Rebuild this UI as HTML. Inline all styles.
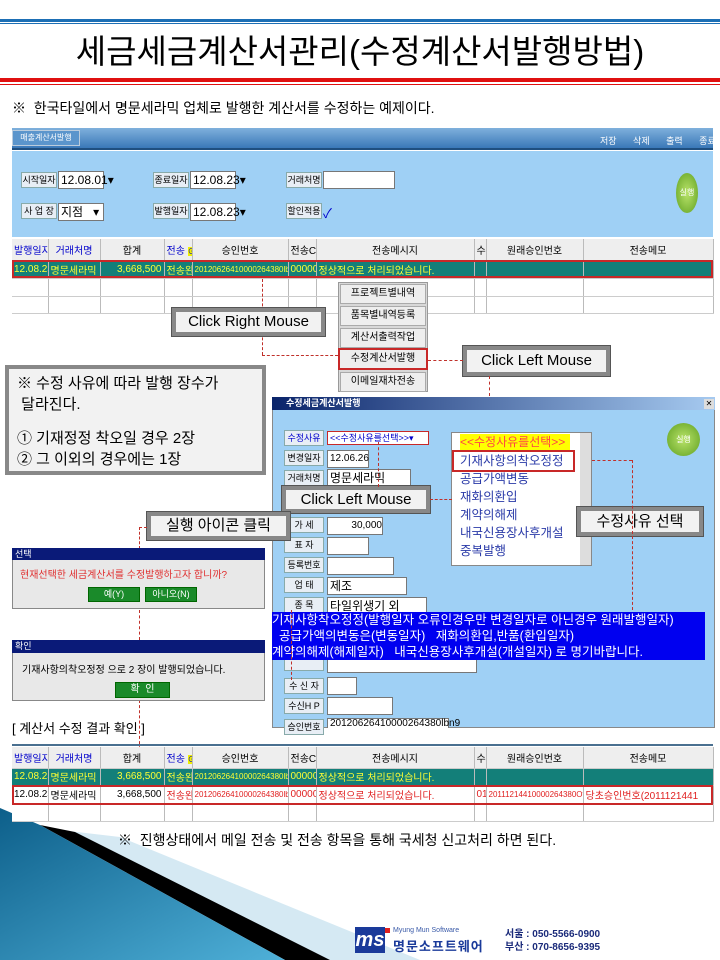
<!DOCTYPE html>
<html><head><meta charset="utf-8">
<style>
*{margin:0;padding:0;box-sizing:border-box}
body{width:720px;height:960px;position:relative;background:#fff;font-family:"Liberation Sans","Noto Sans CJK KR",sans-serif;overflow:hidden;color:#000}
.a{position:absolute}
.f{font-size:11px;white-space:nowrap}
.lbl{position:absolute;background:#e8eef5;border:1px solid #8aa;font-size:9px;text-align:center;line-height:14px;height:16px}
.inp{position:absolute;background:#fff;border:1px solid #777;font-size:12px;line-height:16px;height:18px;padding-left:2px}
.call{position:absolute;background:#f2f2f2;border:4px solid #888;outline:1px solid #555;font-size:15px;white-space:nowrap;text-align:center}
.grid td{border-right:1px solid #bbb;border-bottom:1px solid #ccc;font-size:10px;white-space:nowrap;overflow:hidden;padding:0 2px}
.grid{border-collapse:collapse;table-layout:fixed}
.dash{position:absolute;border-color:#c0302a;border-style:dashed;border-width:0}
</style></head><body>
<!-- decoration (behind) -->
<svg class="a" style="left:0;top:790px" width="720" height="170">
<defs><linearGradient id="g" x1="0" y1="0" x2="1" y2="1"><stop offset="0" stop-color="#0d5f8a"/><stop offset="1" stop-color="#4fb0d8"/></linearGradient></defs>
<polygon points="60,40 120,47 420,170 330,170" fill="#d5e9f3"/>
<polygon points="40,35 75,42 330,170 285,170" fill="#000"/>
<polygon points="0,18 40,35 285,170 0,170" fill="url(#g)"/>
</svg>
<!-- title -->
<div class="a" style="left:0;top:19px;width:720px;height:3px;background:#1d6fb5"></div>
<div class="a" style="left:0;top:23px;width:720px;height:1px;background:#1d6fb5"></div>
<div class="a" style="left:0;top:27px;width:720px;text-align:center;font-size:33px;line-height:50px">세금세금계산서관리(수정계산서발행방법)</div>
<div class="a" style="left:0;top:78px;width:720px;height:4px;background:#e01010"></div>
<div class="a" style="left:0;top:84px;width:720px;height:1px;background:#e01010"></div>
<div class="a" style="left:12px;top:98px;font-size:14px">※ &nbsp;한국타일에서 명문세라믹 업체로 발행한 계산서를 수정하는 예제이다.</div>

<!-- top app -->
<div class="a" style="left:12px;top:128px;width:701px;height:22px;background:linear-gradient(#7fb0dc,#3a78b8);border-bottom:2px solid #1f4f80"></div>
<div class="a f" style="left:12px;top:130px;width:68px;height:16px;background:#5b95cc;border:1px solid #bcd;color:#fff;font-size:8px;text-align:center;line-height:14px">매출계산서발행</div>
<div class="a f" style="left:600px;top:134px;color:#fff;font-size:9px;word-spacing:14px">저장 삭제 출력 종료</div>
<div class="a" style="left:12px;top:151px;width:701px;height:86px;background:#9fd0f5"></div>
<div class="lbl" style="left:21px;top:172px;width:36px">시작일자</div><div class="inp" style="left:58px;top:171px;width:46px">12.08.01▾</div>
<div class="lbl" style="left:21px;top:203px;width:36px">사 업 장</div><div class="inp" style="left:58px;top:203px;width:46px">지점 &nbsp;&nbsp;▾</div>
<div class="lbl" style="left:153px;top:172px;width:36px">종료일자</div><div class="inp" style="left:190px;top:171px;width:46px">12.08.23▾</div>
<div class="lbl" style="left:153px;top:203px;width:36px">발행일자</div><div class="inp" style="left:190px;top:203px;width:46px">12.08.23▾</div>
<div class="lbl" style="left:286px;top:172px;width:36px">거래처명</div><div class="inp" style="left:323px;top:171px;width:72px"></div>
<div class="lbl" style="left:286px;top:203px;width:36px">할인적용</div><div class="a" style="left:323px;top:203px;color:#00c;font-size:13px">✓</div>
<div class="a" style="left:676px;top:173px;width:22px;height:40px;border-radius:50%;background:radial-gradient(#b9e36a,#5fa020);color:#fff;font-size:8px;text-align:center;line-height:40px">실행</div>
<table class="grid a" style="left:12px;top:239px;width:701px;background:#fff">
<colgroup><col width="36"><col width="52"><col width="64"><col width="28"><col width="96"><col width="28"><col width="158"><col width="12"><col width="97"><col width="130"></colgroup>
<tr style="height:21px;background:#eee;text-align:center"><td style="color:#00c">발행일자</td><td style="color:#00c">거래처명</td><td>합계</td><td style="color:#00c">전송 <span style="background:#ee0;font-size:8px">⊙</span></td><td>승인번호</td><td>전송CD</td><td>전송메시지</td><td>수</td><td>원래승인번호</td><td>전송메모</td></tr>
<tr style="height:18px;background:#137f79;color:#ff3"><td>12.08.23</td><td>명문세라믹</td><td style="text-align:right">3,668,500</td><td>전송완료</td><td style="font-size:8px">20120626410000264380lbn9</td><td>000000</td><td>정상적으로 처리되었습니다.</td><td></td><td></td><td></td></tr>
<tr style="height:18px"><td></td><td></td><td></td><td></td><td></td><td></td><td></td><td></td><td></td><td></td></tr>
<tr style="height:17px"><td></td><td></td><td></td><td></td><td></td><td></td><td></td><td></td><td></td><td></td></tr>
</table>
<div class="a" style="left:12px;top:260px;width:701px;height:18px;border:2px solid #c82828"></div>
<div class="dash" style="left:262px;top:279px;height:76px;border-left-width:1px"></div>
<div class="dash" style="left:262px;top:355px;width:76px;border-top-width:1px"></div>

<!-- context menu -->
<div class="a" style="left:338px;top:282px;width:90px;height:110px;background:#d8d8d8;border:1px solid #999"></div>
<div class="a f" style="left:340px;top:284px;width:86px;height:20px;background:#eee;border:1px solid #aaa;text-align:center;line-height:18px;font-size:10px">프로젝트별내역</div>
<div class="a f" style="left:340px;top:306px;width:86px;height:20px;background:#eee;border:1px solid #aaa;text-align:center;line-height:18px;font-size:10px">품목별내역등록</div>
<div class="a f" style="left:340px;top:328px;width:86px;height:20px;background:#eee;border:1px solid #aaa;text-align:center;line-height:18px;font-size:10px">계산서출력작업</div>
<div class="a f" style="left:338px;top:348px;width:90px;height:22px;background:#eee;border:2px solid #c82828;text-align:center;line-height:18px;font-size:10px">수정계산서발행</div>
<div class="a f" style="left:340px;top:372px;width:86px;height:20px;background:#eee;border:1px solid #aaa;text-align:center;line-height:18px;font-size:10px">이메일재차전송</div>
<div class="call" style="left:172px;top:308px;width:153px;height:28px;line-height:20px">Click Right Mouse</div>
<div class="call" style="left:463px;top:346px;width:147px;height:30px;line-height:22px">Click Left Mouse</div>
<div class="dash" style="left:428px;top:360px;width:35px;border-top-width:1px"></div>
<div class="dash" style="left:489px;top:376px;height:20px;border-left-width:1px"></div>

<!-- note -->
<div class="a" style="left:5px;top:365px;width:261px;height:110px;background:#f2f2f2;border:4px solid #888;font-size:15px;line-height:21px;padding:4px 8px">※ 수정 사유에 따라 발행 장수가<br>&nbsp;달라진다.<div style="height:13px"></div>① 기재정정 착오일 경우 2장<br>② 그 이외의 경우에는 1장</div>

<!-- modal -->
<div class="a" style="left:272px;top:397px;width:443px;height:331px;background:#9fd0f5;border:1px solid #888"></div>
<div class="a" style="left:272px;top:397px;width:443px;height:13px;background:linear-gradient(90deg,#0a246a,#a6caf0);color:#fff;font-size:9px;line-height:13px;padding-left:14px;font-weight:bold">수정세금계산서발행</div>
<div class="a" style="left:704px;top:399px;width:10px;height:10px;background:#ddd;font-size:8px;line-height:10px;text-align:center">✕</div>
<div class="lbl" style="left:284px;top:430px;width:40px;color:#00c">수정사유</div><div class="inp" style="left:327px;top:431px;width:102px;border:1px solid #c82828;color:#00c;font-size:9px;line-height:12px;height:14px">&lt;&lt;수정사유를선택&gt;&gt;▾</div>
<div class="lbl" style="left:284px;top:450px;width:40px">변경일자</div><div class="inp" style="left:327px;top:450px;width:42px;font-size:10px">12.06.26</div>
<div class="lbl" style="left:284px;top:470px;width:40px">거래처명</div><div class="inp" style="left:327px;top:469px;width:84px">명문세라믹</div>
<div class="lbl" style="left:284px;top:517px;width:40px">가 세</div><div class="inp" style="left:327px;top:517px;width:56px;text-align:right;font-size:10px">30,000</div>
<div class="lbl" style="left:284px;top:537px;width:40px">표 자</div><div class="inp" style="left:327px;top:537px;width:42px"></div>
<div class="lbl" style="left:284px;top:557px;width:40px">등록번호</div><div class="inp" style="left:327px;top:557px;width:67px"></div>
<div class="lbl" style="left:284px;top:577px;width:40px">업 태</div><div class="inp" style="left:327px;top:577px;width:80px">제조</div>
<div class="lbl" style="left:284px;top:597px;width:40px">종 목</div><div class="inp" style="left:327px;top:597px;width:100px">타일위생기 외</div>
<div class="lbl" style="left:284px;top:655px;width:40px"></div><div class="inp" style="left:327px;top:655px;width:150px"></div>
<div class="lbl" style="left:284px;top:678px;width:40px">수 신 자</div><div class="inp" style="left:327px;top:677px;width:30px"></div>
<div class="lbl" style="left:284px;top:698px;width:40px">수신H P</div><div class="inp" style="left:327px;top:697px;width:66px"></div>
<div class="lbl" style="left:284px;top:719px;width:40px">승인번호</div><div class="inp" style="left:327px;top:718px;width:122px;font-size:10px;height:10px;line-height:10px;border-bottom:0">20120626410000264380lbn9</div>
<div class="a" style="left:667px;top:423px;width:33px;height:33px;border-radius:50%;background:radial-gradient(#b9e36a,#5fa020);color:#fff;font-size:8px;text-align:center;line-height:33px">실행</div>
<!-- listbox -->
<div class="a" style="left:451px;top:432px;width:141px;height:134px;background:#fff;border:1px solid #888"></div>
<div class="a" style="left:580px;top:433px;width:11px;height:132px;background:#ddd"></div>
<div class="a" style="left:460px;top:434px;width:110px;height:16px;background:#ff0;color:#f44;font-size:12px;line-height:16px">&lt;&lt;수정사유를선택&gt;&gt;</div>
<div class="a" style="left:452px;top:450px;width:123px;height:22px;border:2px solid #c82828"></div>
<div class="a" style="left:460px;top:452px;color:#2a3aa8;font-size:12.5px;line-height:18px">기재사항의착오정정<br>공급가액변동<br>재화의환입<br>계약의해제<br>내국신용장사후개설<br>중복발행</div>
<div class="call" style="left:282px;top:486px;width:148px;height:27px;line-height:19px">Click Left Mouse</div>
<div class="dash" style="left:430px;top:499px;width:22px;border-top-width:1px"></div>
<div class="call" style="left:577px;top:507px;width:126px;height:29px;line-height:21px">수정사유 선택</div>
<div class="dash" style="left:592px;top:460px;width:40px;border-top-width:1px"></div>
<div class="dash" style="left:632px;top:460px;height:150px;border-left-width:1px"></div>
<div class="dash" style="left:378px;top:442px;height:45px;border-left-width:1px"></div>
<!-- blue band -->
<div class="a" style="left:272px;top:612px;width:433px;height:48px;background:#0000f0;color:#fff;font-size:12.5px;line-height:16px;white-space:nowrap;overflow:hidden">기재사항착오정정(발행일자 오류인경우만 변경일자로 아닌경우 원래발행일자)<br>&nbsp;&nbsp;공급가액의변동은(변동일자) &nbsp;&nbsp;재화의환입,반품(환입일자)<br>계약의해제(해제일자) &nbsp;&nbsp;내국신용장사후개설(개설일자) 로 명기바랍니다.</div>

<!-- 실행 call -->
<div class="call" style="left:147px;top:512px;width:143px;height:28px;line-height:20px">실행 아이콘 클릭</div>
<div class="dash" style="left:139px;top:527px;width:8px;border-top-width:1px"></div>
<div class="dash" style="left:139px;top:527px;height:22px;border-left-width:1px"></div>
<div class="dash" style="left:139px;top:610px;height:30px;border-left-width:1px"></div>
<div class="dash" style="left:139px;top:700px;height:80px;border-left-width:1px"></div>
<div class="dash" style="left:291px;top:610px;height:70px;border-left-width:1px"></div>

<!-- dialogs -->
<div class="a" style="left:12px;top:548px;width:253px;height:61px;background:#e8e8e8;border:1px solid #888"></div>
<div class="a" style="left:12px;top:548px;width:253px;height:12px;background:#0a1a78;color:#fff;font-size:9px;line-height:12px;padding-left:3px">선택</div>
<div class="a" style="left:20px;top:566px;color:#e03030;font-size:10px">현재선택한 세금계산서를 수정발행하고자 합니까?</div>
<div class="a" style="left:88px;top:587px;width:52px;height:15px;background:#1a8a2a;border:1px solid #060;color:#fff;font-size:9px;text-align:center;line-height:13px">예(Y)</div>
<div class="a" style="left:145px;top:587px;width:52px;height:15px;background:#1a8a2a;border:1px solid #060;color:#fff;font-size:9px;text-align:center;line-height:13px">아니오(N)</div>
<div class="a" style="left:12px;top:640px;width:253px;height:61px;background:#e8e8e8;border:1px solid #888"></div>
<div class="a" style="left:12px;top:640px;width:253px;height:13px;background:#0a1a78;color:#fff;font-size:9px;line-height:13px;padding-left:3px">확인</div>
<div class="a" style="left:22px;top:661px;font-size:10px">기재사항의착오정정 으로 2 장이 발행되었습니다.</div>
<div class="a" style="left:115px;top:682px;width:55px;height:16px;background:#1a8a2a;border:1px solid #060;color:#fff;font-size:10px;text-align:center;line-height:14px">확 &nbsp;인</div>

<div class="a" style="left:12px;top:718px;font-size:13px">[ 계산서 수정 결과 확인 ]</div>

<!-- bottom grid -->
<div class="a" style="left:12px;top:744px;width:701px;height:2px;background:#4a7090"></div>
<table class="grid a" style="left:12px;top:747px;width:701px;background:#fff">
<colgroup><col width="36"><col width="52"><col width="64"><col width="28"><col width="96"><col width="28"><col width="158"><col width="12"><col width="97"><col width="130"></colgroup>
<tr style="height:21px;background:#eee;text-align:center"><td style="color:#00c">발행일자</td><td style="color:#00c">거래처명</td><td>합계</td><td style="color:#00c">전송 <span style="background:#ee0;font-size:8px">⊙</span></td><td>승인번호</td><td>전송CD</td><td>전송메시지</td><td>수</td><td>원래승인번호</td><td>전송메모</td></tr>
<tr style="height:17px;background:#137f79;color:#ff3"><td>12.08.23</td><td>명문세라믹</td><td style="text-align:right">3,668,500</td><td>전송완료</td><td style="font-size:8px">20120626410000264380lbn9</td><td>000000</td><td>정상적으로 처리되었습니다.</td><td></td><td></td><td></td></tr>
<tr style="height:19px;color:#e02020"><td style="color:#000">12.08.23</td><td style="color:#000">명문세라믹</td><td style="text-align:right;color:#000">3,668,500</td><td>전송완료</td><td style="font-size:8px">20120626410000264380lbna</td><td>000000</td><td>정상적으로 처리되었습니다.</td><td>01</td><td style="font-size:8px">20111214410000264380Otht</td><td>당초승인번호(2011121441</td></tr>
<tr style="height:17px"><td></td><td></td><td></td><td></td><td></td><td></td><td></td><td></td><td></td><td></td></tr>
</table>
<div class="a" style="left:12px;top:785px;width:701px;height:20px;border:2px solid #c82828"></div>

<div class="a" style="left:118px;top:830px;font-size:14px">※ &nbsp;진행상태에서 메일 전송 및 전송 항목을 통해 국세청 신고처리 하면 된다.</div>

<!-- logo -->
<div class="a" style="left:355px;top:927px;width:30px;height:26px;background:#1a3a9a;color:#fff;font-weight:bold;font-size:20px;line-height:26px;text-align:center;font-style:italic">ms</div>
<div class="a" style="left:385px;top:928px;width:5px;height:5px;background:#e02020"></div>
<div class="a" style="left:393px;top:927px;font-size:7px;color:#3a5aa8">Myung Mun Software</div>
<div class="a" style="left:393px;top:936px;font-size:13px;font-weight:bold;color:#1a3a9a;letter-spacing:1px">명문소프트웨어</div>
<div class="a" style="left:505px;top:928px;font-size:10px;font-weight:bold;color:#1a2a7a;line-height:13px">서울 : 050-5566-0900<br>부산 : 070-8656-9395</div>
</body></html>
